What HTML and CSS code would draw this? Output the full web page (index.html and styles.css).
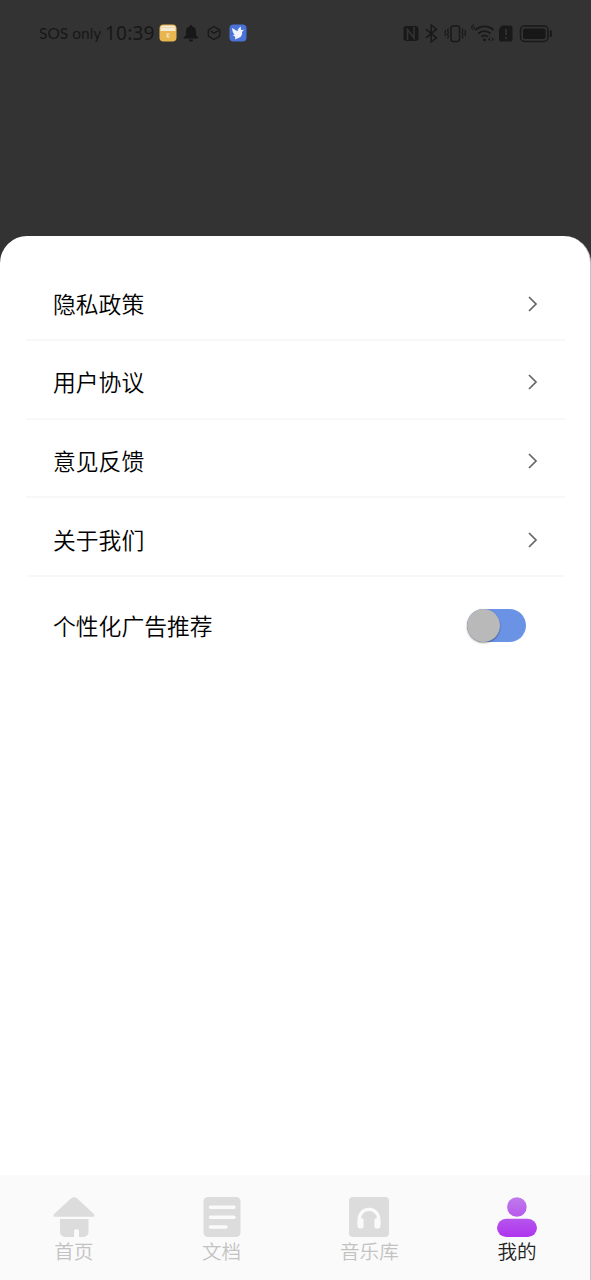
FILE: index.html
```html
<!DOCTYPE html>
<html lang="zh-CN">
<head>
<meta charset="utf-8">
<title>我的</title>
<link rel="stylesheet" href="styles.css">
</head>
<body>
<div class="screen">
  <header class="status">
    <div class="status-left">
      <span class="carrier">SOS only</span>
      <span class="clock">10:39</span>
      <svg class="app-icon" width="18" height="18" viewBox="0 0 18 18"><rect x=".5" y=".5" width="17" height="17" rx="4" fill="#e8b54e"/><path d="M1.500 7V4A2.500 2.500 0 0 1 4 1.500h10A2.500 2.500 0 0 1 16.500 4v3z" fill="#f4ead2"/><path d="M2 3.500h14" stroke="#e9d5a4" stroke-width=".8"/><path d="M10.500 10.200H8.200v2.600h2.300" fill="none" stroke="#f7e7c1" stroke-width="1.200"/></svg>
      <svg class="bell" width="16" height="18" viewBox="0 0 16 18"><path d="M8 1c.9 0 1.300.6 1.300 1.400C12 3 13 5 13 7.500V11l2.200 2.500v1H.8v-1L3 11V7.500C3 5 4 3 6.700 2.400 6.700 1.600 7.100 1 8 1zM5.800 15.500h4.400a2.200 2.200 0 0 1-4.400 0z" fill="#171717"/></svg>
      <svg class="cube" width="14" height="16" viewBox="0 0 14 16"><path d="M7 1.500 12.700 4.800v6.400L7 14.500 1.300 11.200V4.800zM3.500 6 7 8.200 11.500 5.500" fill="none" stroke="#191919" stroke-width="1.400" stroke-linejoin="round"/></svg>
      <svg class="bird" width="18" height="18" viewBox="0 0 18 18"><rect x=".5" y=".5" width="17" height="17" rx="4" fill="#4a72d8"/><path d="M3 4 8.500 7.200c.3-1.800 1.500-3.700 3.300-4.700l.2 3.500 3-.2-2 2.200c.6 3-.9 5.300-3.600 5.900L6 15.500l.3-2.700-2.800-1.300 2-.6C4 9 3.200 6.500 3 4z" fill="#f0f3fa"/></svg>
    </div>
    <svg class="status-right" width="152" height="22" viewBox="402 22 152 22" fill="none" stroke="#191919" stroke-width="1.500">
      <rect x="403.500" y="26" width="15" height="15" rx="3" fill="#191919" stroke="none"/>
      <path d="M407.500 40V29.500l6.500 8.500V27" stroke="#333" stroke-width="1.600"/>
      <path d="M426 29.300l10.500 8.500-5.300 4.200V25l5.300 4.200-10.500 8.600"/>
      <rect x="451" y="26" width="8.500" height="15.500" rx="2"/>
      <path d="M448.500 28.500l-1 2 1 2-1 2 1 2-1 2M445.800 30l-1 2 1 2-1 2M462 28.500l1 2-1 2 1 2-1 2 1 2M464.700 30l1 2-1 2 1 2" stroke-width="1.200"/>
      <path d="M475.500 30.200a12.500 12.500 0 0 1 18 0M478.500 33.500a8.700 8.700 0 0 1 12 0M481.500 36.800a4.500 4.500 0 0 1 6.300 0" stroke-width="1.900"/>
      <circle cx="484.500" cy="39.700" r="1.500" fill="#191919" stroke="none"/>
      <path d="M474 24.500c-2 .5-2.500 2-2.200 3.800.4 1.600 2.800 1.500 2.900-.2.100-1.700-2.100-1.900-2.700-.5" stroke-width="1"/>
      <path d="M489.500 40.500v-3M488 39l1.500 1.500M492.500 38v3M494 39.500L492.500 38" stroke-width="1"/>
      <path d="M502 25.500h8.500a2 2 0 0 1 2 2v12a2 2 0 0 1-2 2H501a2 2 0 0 1-2-2V29z" fill="#191919" stroke="none"/>
      <path d="M506 29v6M506 37v2" stroke="#363636"/>
      <rect x="520.500" y="26" width="27.500" height="15.500" rx="4"/>
      <rect x="523" y="28.500" width="22.500" height="10.500" rx="2" fill="#171717" stroke="none"/>
      <path d="M550.800 30.500v6.500" stroke-width="2"/>
    </svg>
  </header>

  <main class="sheet">
    <ul class="menu">
      <li class="row"><span>隐私政策</span><svg class="chevron" width="12" height="18" viewBox="0 0 12 18"><path d="M2 2l7 7-7 7"/></svg></li>
      <li class="row"><span>用户协议</span><svg class="chevron" width="12" height="18" viewBox="0 0 12 18"><path d="M2 2l7 7-7 7"/></svg></li>
      <li class="row"><span>意见反馈</span><svg class="chevron" width="12" height="18" viewBox="0 0 12 18"><path d="M2 2l7 7-7 7"/></svg></li>
      <li class="row"><span>关于我们</span><svg class="chevron" width="12" height="18" viewBox="0 0 12 18"><path d="M2 2l7 7-7 7"/></svg></li>
      <li class="row row-switch"><span>个性化广告推荐</span><span class="switch"><span class="knob"></span></span></li>
    </ul>
  </main>

  <nav class="tabs">
    <a class="tab">
      <svg width="42" height="40" viewBox="0 0 42 40" fill="#dcdcdc"><path d="M17.800 1.500a5 5 0 0 1 6.400 0L40.800 17c1.200 1.300.7 2.700-1 2.700H2.200c-1.700 0-2.200-1.400-1-2.700z"/><path d="M7 22h28.500v13a5 5 0 0 1-5 5H26v-5.500a2.500 2.500 0 0 0-5 0V40h-9a5 5 0 0 1-5-5z"/></svg>
      <span>首页</span>
    </a>
    <a class="tab">
      <svg width="42" height="40" viewBox="0 0 42 40"><rect x="2.500" width="37" height="40" rx="4.500" fill="#dcdcdc"/><path d="M9.500 10.300h23.500M9.500 20.300h23.500M9.500 30h15.500" stroke="#fafafa" stroke-width="3.500" stroke-linecap="round"/></svg>
      <span>文档</span>
    </a>
    <a class="tab">
      <svg width="42" height="40" viewBox="0 0 42 40"><rect x="1" width="40" height="40" rx="4" fill="#dcdcdc"/><path d="M11.300 28v-6a9.700 9.700 0 0 1 19.400 0v6" fill="none" stroke="#fafafa" stroke-width="3.300"/><rect x="9.600" y="21" width="6" height="10.500" rx="2.500" fill="#fafafa"/><rect x="26.400" y="21" width="6" height="10.500" rx="2.500" fill="#fafafa"/></svg>
      <span>音乐库</span>
    </a>
    <a class="tab active">
      <svg width="42" height="40" viewBox="0 0 42 40"><defs><linearGradient id="user" gradientUnits="userSpaceOnUse" x1="0" y1="0" x2="0" y2="40"><stop offset="0" stop-color="#c07aec"/><stop offset="1" stop-color="#ae35ee"/></linearGradient></defs><g fill="url(#user)"><circle cx="20.900" cy="10" r="9.800"/><rect x="1" y="21.700" width="40" height="18.300" rx="9.150"/></g></svg>
      <span>我的</span>
    </a>
  </nav>
</div>
</body>
</html>
```
FILE: styles.css
```css
* {
  box-sizing: border-box;
}

body {
  margin: 0;
  background: #333;
  font-family: "Noto Sans CJK SC", sans-serif;
  font-weight: 350;
}

.screen {
  display: flex;
  flex-direction: column;
  height: 1280px;
  overflow: hidden;
}

.status {
  display: flex;
  justify-content: space-between;
  align-items: flex-start;
  flex: 0 0 236px;
  padding: 22px 37px 0 39px;
  color: #171717;
  font-family: Lato, sans-serif;
  font-weight: 400;
}

.status-left {
  display: flex;
  align-items: center;
  height: 22px;
}

.carrier {
  width: 66px;
  font-size: 15.5px;
  white-space: nowrap;
}

.clock {
  width: 54px;
  font-family: "Noto Sans", sans-serif;
  font-size: 19px;
  letter-spacing: 0.2px;
}

.bell {
  margin-left: 6px;
}

.cube {
  margin-left: 8px;
}

.bird {
  margin-left: 8px;
}

.sheet {
  flex: 1;
  padding: 26px 25px 0 26px;
  border-right: 1px solid #c4c4c4;
  border-radius: 27px 27px 0 0;
  background: #fff;
}

.menu {
  margin: 0;
  padding: 0;
  list-style: none;
}

.row {
  display: flex;
  align-items: center;
  justify-content: space-between;
  height: 78.8px;
  padding: 6.6px 26px 0 27px;
  border-bottom: 2px solid #f8f8f8;
  color: #000;
  font-size: 22.8px;
  line-height: 34px;
}

.chevron {
  fill: none;
  stroke: #666;
  stroke-width: 1.7;
}

.row-switch {
  height: 97px;
  padding: 0 39px 0 27px;
  border-bottom: 0;
}

.switch {
  width: 59px;
  height: 33px;
  border-radius: 17px;
  background: #6b93e5;
}

.knob {
  display: block;
  width: 33px;
  height: 33px;
  border-radius: 50%;
  background: #b9b9b9;
  box-shadow: 0 1px 2px rgba(0, 0, 0, 0.4);
}

.tabs {
  display: grid;
  grid-template-columns: repeat(4, 1fr);
  flex: 0 0 105px;
  padding-top: 22px;
  background: #fafafa;
  box-shadow: inset -1px 0 #c4c4c4;
}

.tab {
  display: flex;
  flex-direction: column;
  align-items: center;
  color: #c2c2c2;
  font-size: 19.6px;
  line-height: 27px;
}

.active {
  color: #222;
}
```
